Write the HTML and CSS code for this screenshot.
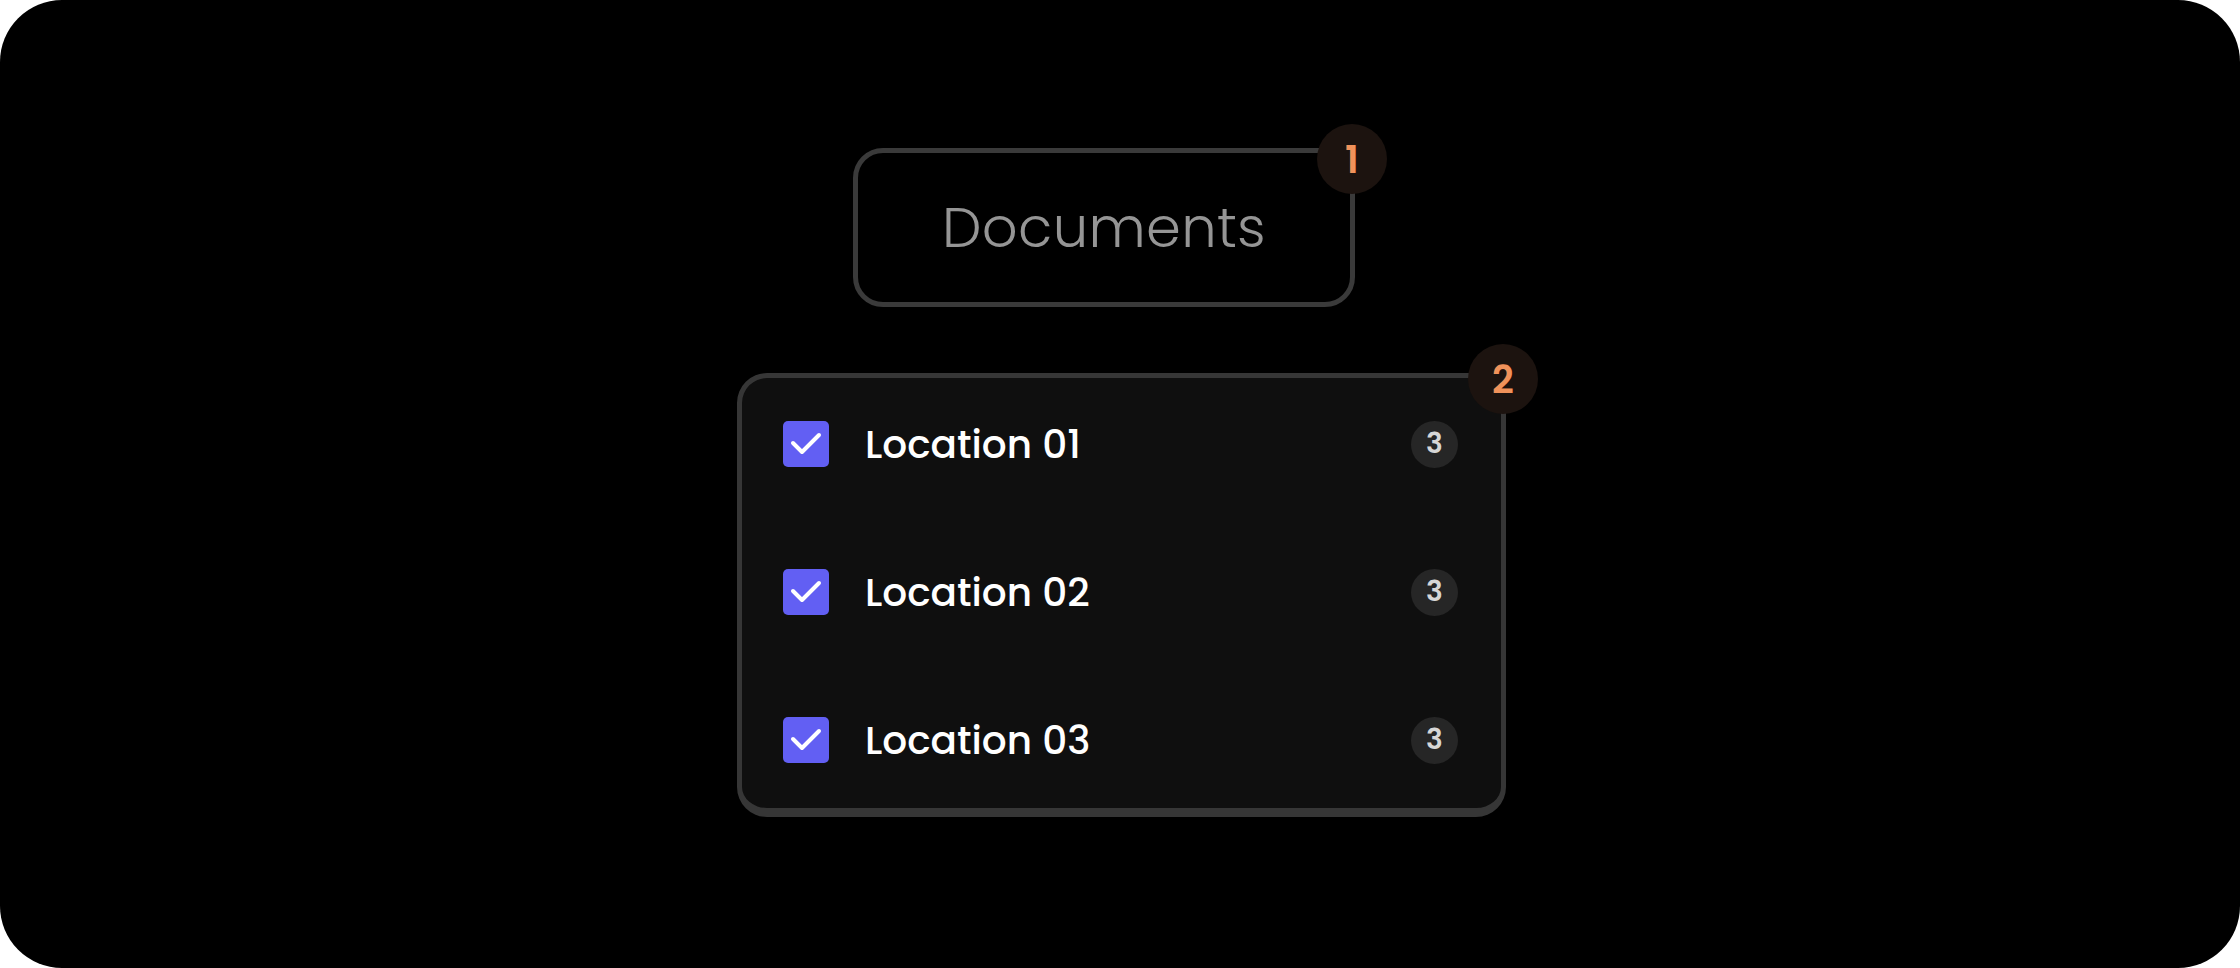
FILE: index.html
```html
<!DOCTYPE html>
<html lang="en">
<head>
<meta charset="utf-8">
<title>Documents</title>
<link rel="stylesheet" href="styles.css">
</head>
<body>
<div class="canvas">
  <div class="doc-box">
    <span class="doc-label">Documents</span>
    <span class="step">1</span>
  </div>
  <div class="list-box">
    <div class="row">
      <span class="check"><svg viewBox="0 0 46 46" width="46" height="46"><path d="M10 22 L19 31 L36 14" fill="none" stroke="#fff" stroke-width="4" stroke-linecap="round" stroke-linejoin="round"/></svg></span>
      <span class="label">Location 01</span>
      <span class="count">3</span>
    </div>
    <div class="row">
      <span class="check"><svg viewBox="0 0 46 46" width="46" height="46"><path d="M10 22 L19 31 L36 14" fill="none" stroke="#fff" stroke-width="4" stroke-linecap="round" stroke-linejoin="round"/></svg></span>
      <span class="label">Location 02</span>
      <span class="count">3</span>
    </div>
    <div class="row">
      <span class="check"><svg viewBox="0 0 46 46" width="46" height="46"><path d="M10 22 L19 31 L36 14" fill="none" stroke="#fff" stroke-width="4" stroke-linecap="round" stroke-linejoin="round"/></svg></span>
      <span class="label">Location 03</span>
      <span class="count">3</span>
    </div>
    <span class="step step-2">2</span>
  </div>
</div>
</body>
</html>
```

FILE: styles.css
```css
html, body {
  margin: 0;
  padding: 0;
  background: #ffffff;
}

body {
  font-family: "Poppins", "Inter", "Open Sans", sans-serif;
}

.canvas {
  width: 2240px;
  height: 968px;
  background: #000000;
  border-radius: 62px;
  box-sizing: border-box;
  padding-top: 148px;
  display: flex;
  flex-direction: column;
  align-items: center;
  overflow: hidden;
}

.doc-box {
  position: relative;
  width: 502px;
  height: 159px;
  box-sizing: border-box;
  border: 5px solid #3a3a3a;
  border-radius: 30px;
  margin-right: 32px;
  display: flex;
  align-items: center;
  justify-content: center;
}

.doc-label {
  font-size: 56px;
  font-weight: 300;
  color: #959595;
  letter-spacing: 0.3px;
}

.step {
  position: absolute;
  left: 459px;
  top: -29px;
  width: 70px;
  height: 70px;
  border-radius: 50%;
  background: #1c130f;
  color: #f0925a;
  font-size: 38px;
  font-weight: 600;
  display: flex;
  align-items: center;
  justify-content: center;
}

.list-box {
  position: relative;
  margin-top: 66px;
  margin-left: 3px;
  width: 769px;
  height: 444px;
  box-sizing: border-box;
  background: #0f0f0f;
  border: 5px solid #363636;
  border-bottom-width: 9px;
  border-radius: 30px;
  padding: 43px 43px 0 41px;
  display: flex;
  flex-direction: column;
  gap: 102px;
}

.step-2 {
  left: 726px;
  top: -34px;
}

.row {
  height: 46px;
  display: flex;
  align-items: center;
}

.check {
  width: 46px;
  height: 46px;
  border-radius: 5px;
  background: #625ff3;
  display: flex;
  flex: none;
}

.label {
  margin-left: 36px;
  font-size: 39px;
  font-weight: 500;
  color: #ffffff;
  flex: 1;
}

.count {
  width: 47px;
  height: 47px;
  border-radius: 50%;
  background: #262626;
  color: #d6d6d6;
  font-size: 28px;
  font-weight: 600;
  display: flex;
  align-items: center;
  justify-content: center;
  flex: none;
}
```
